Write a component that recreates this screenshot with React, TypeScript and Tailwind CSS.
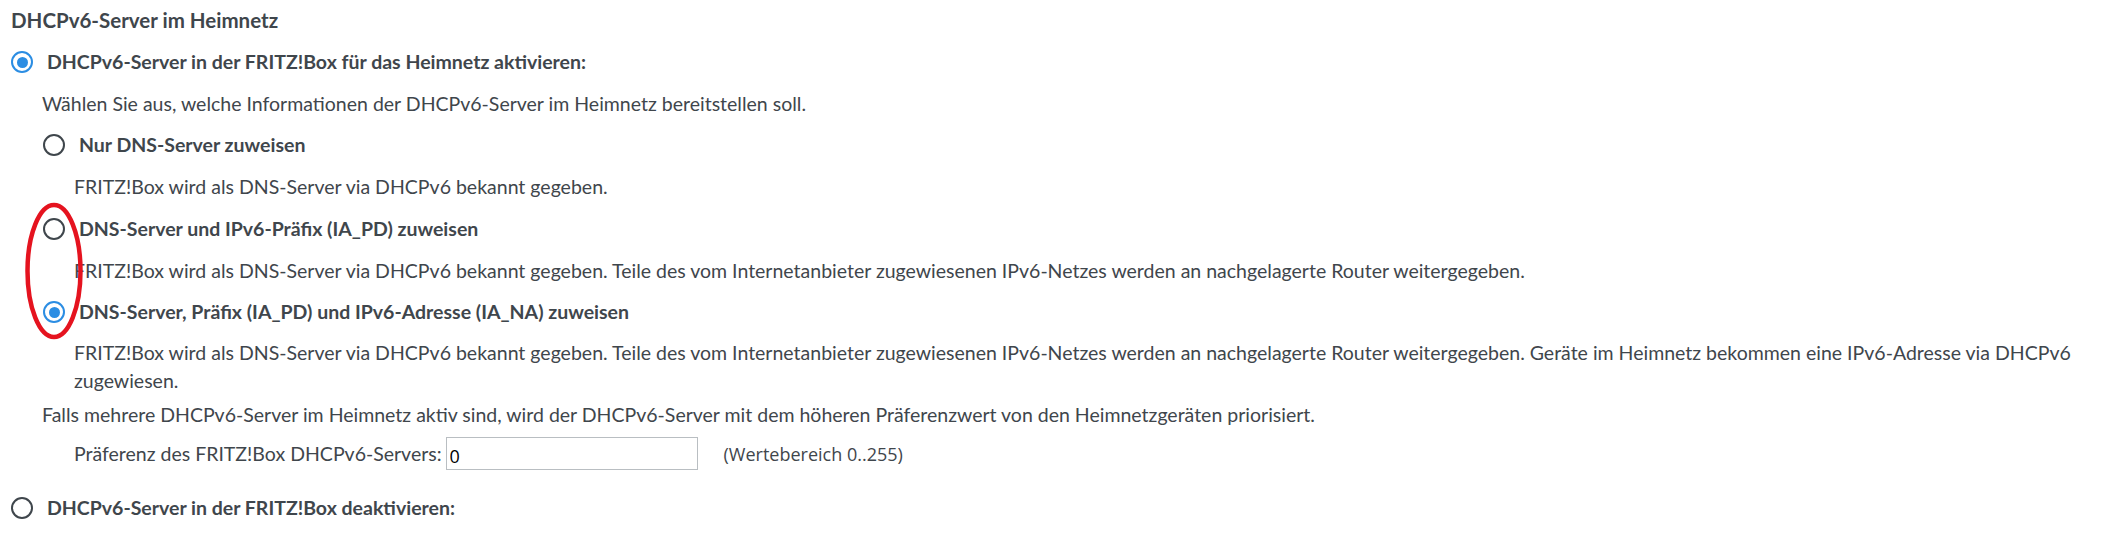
import React from "react";

function Radio({ checked }: { checked?: boolean }) {
  return checked ? (
    <span className="flex h-[22px] w-[22px] shrink-0 items-center justify-center rounded-full border-[2.5px] border-[#2b8de3] bg-white">
      <span className="h-[11px] w-[11px] rounded-full bg-[#2b8de3]" />
    </span>
  ) : (
    <span className="h-[22px] w-[22px] shrink-0 rounded-full border-[2px] border-[#3f464c] bg-white" />
  );
}

export default function App() {
  return (
    <div
      className="relative h-[538px] w-[2111px] overflow-hidden bg-white text-[19.5px] leading-[28px] text-[#3f464c]"
      style={{ fontFamily: "Lato, 'Noto Sans', sans-serif" }}
    >
      <div className="flex flex-col pt-[6px]">
        <div className="pl-[11px] text-[20.5px] font-bold">DHCPv6-Server im Heimnetz</div>

        <label className="mt-[14px] flex items-center gap-[14px] pl-[11px] font-bold">
          <Radio checked />
          <span>DHCPv6-Server in der FRITZ!Box für das Heimnetz aktivieren:</span>
        </label>

        <div className="mt-[14px] pl-[42px]">
          Wählen Sie aus, welche Informationen der DHCPv6-Server im Heimnetz bereitstellen soll.
        </div>

        <label className="mt-[13px] flex items-center gap-[14px] pl-[43px] font-bold">
          <Radio />
          <span>Nur DNS-Server zuweisen</span>
        </label>
        <div className="mt-[14px] pl-[74px]">FRITZ!Box wird als DNS-Server via DHCPv6 bekannt gegeben.</div>

        <label className="mt-[14px] flex items-center gap-[14px] pl-[43px] font-bold">
          <Radio />
          <span>DNS-Server und IPv6-Präfix (IA_PD) zuweisen</span>
        </label>
        <div className="mt-[14px] pl-[74px]">
          FRITZ!Box wird als DNS-Server via DHCPv6 bekannt gegeben. Teile des vom Internetanbieter zugewiesenen IPv6-Netzes werden an nachgelagerte Router weitergegeben.
        </div>

        <label className="mt-[13px] flex items-center gap-[14px] pl-[43px] font-bold">
          <Radio checked />
          <span>DNS-Server, Präfix (IA_PD) und IPv6-Adresse (IA_NA) zuweisen</span>
        </label>
        <div className="mt-[13px] pl-[74px]">
          FRITZ!Box wird als DNS-Server via DHCPv6 bekannt gegeben. Teile des vom Internetanbieter zugewiesenen IPv6-Netzes werden an nachgelagerte Router weitergegeben. Geräte im Heimnetz bekommen eine IPv6-Adresse via DHCPv6
          <br />
          zugewiesen.
        </div>

        <div className="mt-[6px] pl-[42px]">
          Falls mehrere DHCPv6-Server im Heimnetz aktiv sind, wird der DHCPv6-Server mit dem höheren Präferenzwert von den Heimnetzgeräten priorisiert.
        </div>

        <div className="mt-[8px] flex items-center pl-[74px]">
          <span>Präferenz des FRITZ!Box DHCPv6-Servers:</span>
          <input
            defaultValue="0"
            className="ml-[4px] h-[33px] w-[252px] border border-[#b9bec2] bg-white px-[3px] pt-[4px] text-[18px] text-black outline-none"
            style={{ fontFamily: "'Open Sans', sans-serif" }}
          />
          <span className="ml-[26px]" style={{ fontFamily: "'Open Sans', sans-serif", fontSize: "18px" }}>
            (Wertebereich 0..255)
          </span>
        </div>

        <label className="mt-[24px] flex items-center gap-[14px] pl-[11px] font-bold">
          <Radio />
          <span>DHCPv6-Server in der FRITZ!Box deaktivieren:</span>
        </label>
      </div>

      <svg className="pointer-events-none absolute left-[23px] top-[201px]" width="62" height="140" viewBox="0 0 62 140">
        <ellipse cx="31" cy="70" rx="26.5" ry="66" fill="none" stroke="#e5131f" strokeWidth="4.5" />
      </svg>
    </div>
  );
}
